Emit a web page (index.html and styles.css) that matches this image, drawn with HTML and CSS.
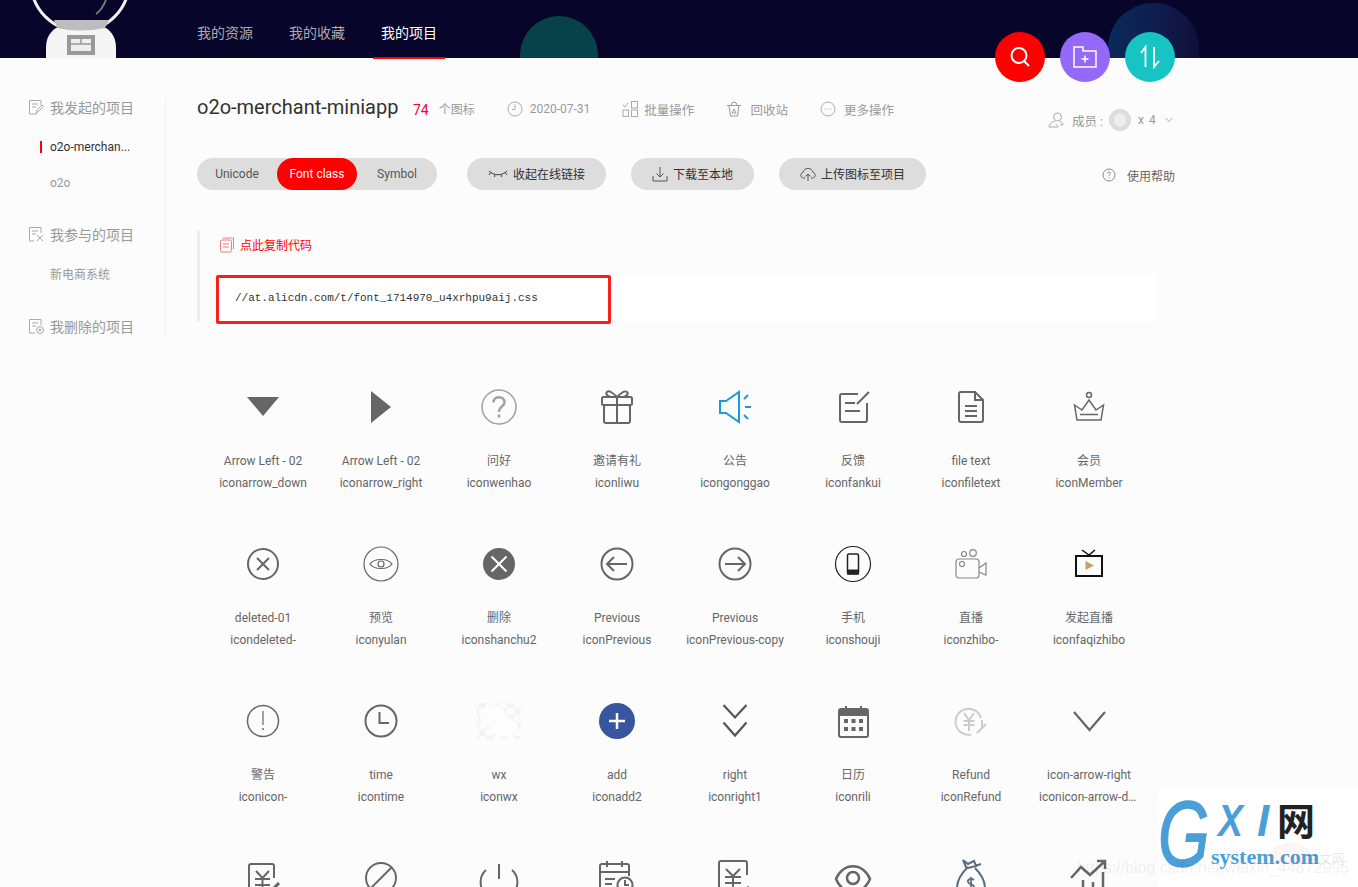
FILE: index.html
```html
<!DOCTYPE html>
<html lang="zh">
<head>
  <meta charset="UTF-8">
  <title>o2o-merchant-miniapp</title>
  <link rel="stylesheet" href="styles.css">
</head>
<body>
  <header class="top">
    <svg class="astro" width="140" height="58" viewBox="0 0 140 58">
      <circle cx="80" cy="-18" r="49" fill="none" stroke="#f2f2f2" stroke-width="3"/>
      <path d="M106 0q-4 10-10 14" fill="none" stroke="#777" stroke-width="2"/>
      <path d="M46 58V48C46 38 50 32 56 28H106C112 32 116 38 116 48V58Z" fill="#f5f5f5"/>
      <path d="M54 20H109L105 28Q80 33 57 28Z" fill="#bdbdbd"/>
      <rect x="67" y="35" width="28" height="20" fill="#999"/>
      <rect x="71" y="39" width="20" height="12" fill="#eee"/>
      <path d="M71 44H91M81 39V44" stroke="#999" stroke-width="1.5"/>
    </svg>
    <div class="blob blob-teal"></div>
    <div class="blob blob-blue"></div>
    <nav class="nav">
      <a class="nav-item">我的资源</a>
      <a class="nav-item">我的收藏</a>
      <a class="nav-item active">我的项目</a>
    </nav>
    <div class="fabs">
      <a class="fab fab-red">
        <svg width="24" height="24" viewBox="0 0 24 24" fill="none" stroke="#fff" stroke-width="2"><circle cx="11" cy="10.5" r="7.5"/><path d="M16 16l5 5"/></svg>
      </a>
      <a class="fab fab-purple">
        <svg width="26" height="26" viewBox="0 0 26 26" fill="none" stroke="#fff" stroke-width="1.5"><path d="M2 23V3H11V7H24V23Z"/><path d="M13 11.5v7M9.5 15h7"/></svg>
      </a>
      <a class="fab fab-teal">
        <svg width="26" height="26" viewBox="0 0 26 26" fill="none" stroke="#fff" stroke-width="1.800"><path d="M4 9L8.500 3V23"/><path d="M17 3V23L22 17"/></svg>
      </a>
    </div>
  </header>

  <div class="upper">
    <aside class="side">
      <div class="side-head">
        <svg class="ico16" viewBox="0 0 16 16" fill="none" stroke="#aaa"><path d="M9 15H1.500V1.500H13V6M4 5H10M4 8H8"/><path d="M8 14l1-3 5-5 1.500 1.500-5 5z"/></svg>
        我发起的项目
      </div>
      <a class="side-item current">o2o-merchan...</a>
      <a class="side-item">o2o</a>
      <div class="side-head gap">
        <svg class="ico16" viewBox="0 0 16 16" fill="none" stroke="#aaa"><path d="M6 15H1.500V1.500H13V7M4 5H10M4 8H8"/><path d="M9 9l6 6M15 9l-6 6"/></svg>
        我参与的项目
      </div>
      <a class="side-item">新电商系统</a>
      <div class="side-head gap">
        <svg class="ico16" viewBox="0 0 16 16" fill="none" stroke="#aaa"><path d="M7 15H1.500V1.500H13V7M4 5H10M4 8H8"/><circle cx="12" cy="12" r="3.500"/><path d="M10.500 10.500l3 3M13.500 10.500l-3 3"/></svg>
        我删除的项目
      </div>
    </aside>

    <main class="main">
      <div class="title-row">
        <h1 class="title">o2o-merchant-miniapp</h1>
        <span class="count">74</span>
        <span class="count-unit">个图标</span>
        <span class="meta date">
          <svg class="ico16" viewBox="0 0 16 16" fill="none" stroke="#aaa"><circle cx="8" cy="8" r="7"/><path d="M8 3.500V8.500H5"/></svg>
          2020-07-31
        </span>
        <span class="meta narrow">
          <svg class="ico16" viewBox="0 0 16 16" fill="none" stroke="#aaa"><path d="M1 4l2 2 3-4"/><rect x="9.500" y=".5" width="6" height="6.500"/><rect x="1" y="9" width="5.500" height="6.500"/><rect x="9.500" y="9" width="6" height="6.500"/></svg>
          批量操作
        </span>
        <span class="meta">
          <svg class="ico16" viewBox="0 0 16 16" fill="none" stroke="#999"><path d="M1 4.500H15M3 4.500L4.500 15H11.500L13 4.500M5 4.500C5 0 11 0 11 4.500M8 8l-2 4h4z"/></svg>
          回收站
        </span>
        <span class="meta">
          <svg class="ico16" viewBox="0 0 16 16" fill="none" stroke="#aaa"><circle cx="8" cy="8" r="7"/><path d="M4.500 8h1M7.500 8h1M10.500 8h1" stroke-width="1.200"/></svg>
          更多操作
        </span>
        <div class="members">
          <svg class="ico16" viewBox="0 0 16 16" fill="none" stroke="#aaa"><circle cx="9.500" cy="5" r="4"/><path d="M7 9C4 10 1 12 1 15H10C9.500 13 8 13 7.500 12M12 9.500C13.500 10 15 11 15 13H12"/></svg>
          <span class="members-label">成员 :</span>
          <span class="avatar"><span class="avatar-in"></span></span>
          <span class="members-num">x 4</span>
          <svg class="chev" width="8" height="6" viewBox="0 0 8 6" fill="none" stroke="#aaa"><path d="M.5 1L4 4.500 7.500 1"/></svg>
        </div>
      </div>

      <div class="toolbar">
        <div class="tabs">
          <a class="tab">Unicode</a>
          <a class="tab on">Font class</a>
          <a class="tab">Symbol</a>
        </div>
        <a class="pill first">
          <svg width="20" height="8" viewBox="0 0 20 8" fill="none" stroke="#444"><path d="M1 1C6 6 14 6 19 1M3 2L1 5M7 4L6.500 7M13 4L13.500 7M17 2L19 5"/></svg>
          收起在线链接
        </a>
        <a class="pill">
          <svg class="ico16" viewBox="0 0 16 16" fill="none" stroke="#555"><path d="M1 10V15H15V10M8 1V11M4.500 7.500L8 11 11.500 7.500"/></svg>
          下载至本地
        </a>
        <a class="pill">
          <svg class="ico16" viewBox="0 0 16 16" fill="none" stroke="#555"><path d="M5 12H3.500C0 12 0 7 3 6.500 4 1 12 1 13 6.500 16 7 16 12 12.500 12H11M8 15V8M5.500 10.500L8 8l2.500 2.500"/></svg>
          上传图标至项目
        </a>
        <a class="help">
          <svg class="ico14" viewBox="0 0 14 14" fill="none" stroke="#888"><circle cx="7" cy="7" r="6"/><path d="M5.500 5.500C5.500 3.500 8.500 3.500 8.500 5.500 8.500 6.800 7 6.500 7 8.200M7 9.500v1"/></svg>
          使用帮助
        </a>
      </div>

      <section class="code-block">
        <a class="copy">
          <svg class="ico16" viewBox="0 0 16 16" fill="none" stroke="#f5787a"><rect x="1.500" y="3" width="11" height="12" rx="1.500"/><path d="M4 1H14.500V12M4 7H10M4 10H10"/></svg>
          点此复制代码
        </a>
        <div class="code">
          //at.alicdn.com/t/font_1714970_u4xrhpu9aij.css
          <div class="mark"></div>
        </div>
      </section>
    </main>
  </div>

  <div class="grid">
    <div class="cell">
      <svg class="ic" viewBox="0 0 40 40"><path d="M4 10H36L20 29Z" fill="#666"/></svg>
      <p>Arrow Left - 02</p><p class="nm">iconarrow_down</p>
    </div>
    <div class="cell">
      <svg class="ic" viewBox="0 0 40 40"><path d="M10 4L30 20 10 36Z" fill="#666"/></svg>
      <p>Arrow Left - 02</p><p class="nm">iconarrow_right</p>
    </div>
    <div class="cell">
      <svg class="ic" viewBox="0 0 40 40" fill="none" stroke="#a0a0a0"><circle cx="20" cy="20" r="17" stroke-width="1.500"/><path d="M14.500 15.500C14.500 8.500 25.500 8.500 25.500 15.500 25.500 19.500 20 19.500 20 25" stroke-width="2.500"/><path d="M20 27.500v3" stroke-width="2.500"/></svg>
      <p>问好</p><p class="nm">iconwenhao</p>
    </div>
    <div class="cell">
      <svg class="ic" viewBox="0 0 40 40" fill="none" stroke="#666" stroke-width="2"><rect x="5" y="10" width="30" height="8" rx="1.500"/><rect x="7" y="18" width="26" height="18" rx="2"/><path d="M20 10V36M20 10C16 6 12 3 10 5 8 7 11 10 14 10M20 10C24 6 28 3 30 5 32 7 29 10 26 10"/></svg>
      <p>邀请有礼</p><p class="nm">iconliwu</p>
    </div>
    <div class="cell">
      <svg class="ic" viewBox="0 0 40 40" fill="none" stroke="#1b9ae0" stroke-width="2"><path d="M5 14H11L24 5V35L11 26H5Z"/><path d="M29 12L33 8M30 20H36M29 28L33 32"/></svg>
      <p>公告</p><p class="nm">icongonggao</p>
    </div>
    <div class="cell">
      <svg class="ic" viewBox="0 0 40 40" fill="none" stroke="#666" stroke-width="2"><path d="M25 7H9A2 2 0 0 0 7 9V33A2 2 0 0 0 9 35H32A2 2 0 0 0 34 33V16"/><path d="M24 17L36 5M12 16H22M12 24H27"/></svg>
      <p>反馈</p><p class="nm">iconfankui</p>
    </div>
    <div class="cell">
      <svg class="ic" viewBox="0 0 40 40" fill="none" stroke="#666" stroke-width="2"><path d="M10 5H24L32 13V33A2 2 0 0 1 30 35H10A2 2 0 0 1 8 33V7A2 2 0 0 1 10 5ZM24 5V13H32M14 19H26M14 24H26M14 29H26"/></svg>
      <p>file text</p><p class="nm">iconfiletext</p>
    </div>
    <div class="cell">
      <svg class="ic" viewBox="0 0 40 40" fill="none" stroke="#666" stroke-width="1.500"><circle cx="20" cy="8" r="2.500"/><path d="M5.500 18L13 23 20 13 27 23 34.500 18 32 33H8ZM11 27.500H29"/></svg>
      <p>会员</p><p class="nm">iconMember</p>
    </div>

    <div class="cell">
      <svg class="ic" viewBox="0 0 40 40" fill="none" stroke="#666" stroke-width="2"><circle cx="20" cy="20" r="15"/><path d="M14 14L26 26M26 14L14 26"/></svg>
      <p>deleted-01</p><p class="nm">icondeleted-</p>
    </div>
    <div class="cell">
      <svg class="ic" viewBox="0 0 40 40" fill="none" stroke="#666" stroke-width="1.200"><circle cx="20" cy="20" r="17"/><path d="M9 20C13 14 27 14 31 20 27 26 13 26 9 20Z"/><circle cx="20" cy="20" r="3"/></svg>
      <p>预览</p><p class="nm">iconyulan</p>
    </div>
    <div class="cell">
      <svg class="ic" viewBox="0 0 40 40" fill="none"><circle cx="20" cy="20" r="16" fill="#666"/><path d="M12.500 12.500L27.500 27.500M27.500 12.500L12.500 27.500" stroke="#fff" stroke-width="2"/></svg>
      <p>删除</p><p class="nm">iconshanchu2</p>
    </div>
    <div class="cell">
      <svg class="ic" viewBox="0 0 40 40" fill="none" stroke="#666" stroke-width="2"><circle cx="20" cy="20" r="15.500"/><path d="M30 20H10M17 13L10 20 17 27"/></svg>
      <p>Previous</p><p class="nm">iconPrevious</p>
    </div>
    <div class="cell">
      <svg class="ic" viewBox="0 0 40 40" fill="none" stroke="#666" stroke-width="2"><circle cx="20" cy="20" r="15.500"/><path d="M10 20H30M23 13L30 20 23 27"/></svg>
      <p>Previous</p><p class="nm">iconPrevious-copy</p>
    </div>
    <div class="cell">
      <svg class="ic" viewBox="0 0 40 40" fill="none" stroke="#222"><circle cx="20" cy="20" r="17.500" stroke-width="1.200"/><rect x="14.500" y="10" width="11" height="20" rx="1.500" stroke-width="1.500"/><rect x="14.500" y="26" width="11" height="4" fill="#222"/></svg>
      <p>手机</p><p class="nm">iconshouji</p>
    </div>
    <div class="cell">
      <svg class="ic" viewBox="0 0 40 40" fill="none" stroke="#888" stroke-width="1.200"><rect x="5" y="15" width="23" height="19" rx="3"/><path d="M28 24L35 19V31L28 28"/><circle cx="13" cy="10" r="2.500"/><circle cx="22" cy="9" r="3.300"/><circle cx="11" cy="20" r="2.500"/></svg>
      <p>直播</p><p class="nm">iconzhibo-</p>
    </div>
    <div class="cell">
      <svg class="ic" viewBox="0 0 40 40" fill="none"><rect x="7" y="12" width="26" height="20" stroke="#111" stroke-width="2"/><path d="M13 6L20 11 26 6" stroke="#111" stroke-width="1.500"/><path d="M16.500 17L25 21.500 16.500 26Z" fill="#c9a063"/></svg>
      <p>发起直播</p><p class="nm">iconfaqizhibo</p>
    </div>

    <div class="cell">
      <svg class="ic" viewBox="0 0 40 40" fill="none" stroke="#666"><circle cx="20" cy="20" r="15.500" stroke-width="1.500"/><path d="M20 10V24" stroke-width="1.200"/><path d="M20 27v2" stroke-width="1.500"/></svg>
      <p>警告</p><p class="nm">iconicon-</p>
    </div>
    <div class="cell">
      <svg class="ic" viewBox="0 0 40 40" fill="none" stroke="#666" stroke-width="2"><circle cx="20" cy="20" r="15.500"/><path d="M18.500 11V22H28"/></svg>
      <p>time</p><p class="nm">icontime</p>
    </div>
    <div class="cell">
      <svg class="ic" viewBox="0 0 40 40">
        <defs><pattern id="chk" width="14" height="14" patternUnits="userSpaceOnUse"><rect width="7" height="7" fill="#f3f3f3"/><rect x="7" y="7" width="7" height="7" fill="#f3f3f3"/></pattern></defs>
        <rect x="-2" y="2" width="44" height="36" fill="url(#chk)"/>
        <ellipse cx="14" cy="15" rx="13" ry="11" fill="#fdfdfd"/>
        <ellipse cx="25" cy="26" rx="14" ry="10" fill="#fdfdfd"/>
      </svg>
      <p>wx</p><p class="nm">iconwx</p>
    </div>
    <div class="cell">
      <svg class="ic" viewBox="0 0 40 40"><circle cx="20" cy="20" r="18" fill="#3a559f"/><path d="M20 12V28M12 20H28" stroke="#fff" stroke-width="2.500"/></svg>
      <p>add</p><p class="nm">iconadd2</p>
    </div>
    <div class="cell">
      <svg class="ic" viewBox="0 0 40 40" fill="none" stroke="#555" stroke-width="2.200"><path d="M8.500 4L20 16.500 31.500 4M8.500 21.500L20 34.500 31.500 21.500"/></svg>
      <p>right</p><p class="nm">iconright1</p>
    </div>
    <div class="cell">
      <svg class="ic" viewBox="0 0 40 40"><rect x="6" y="8" width="29" height="28" rx="2" fill="none" stroke="#666" stroke-width="2"/><rect x="6" y="8" width="29" height="7" fill="#666"/><path d="M13 5V11M28 5V11" stroke="#666" stroke-width="2"/><path d="M11 18h4v4h-4zM18.500 18h4v4h-4zM26 18h4v4h-4zM11 26h4v4h-4zM18.500 26h4v4h-4zM26 26h4v4h-4z" fill="#666"/></svg>
      <p>日历</p><p class="nm">iconrili</p>
    </div>
    <div class="cell">
      <svg class="ic" viewBox="0 0 40 40" fill="none" stroke="#ccc" stroke-width="2"><path d="M30 17A13 13 0 1 0 20 33.500"/><path d="M13 12L18 19 23 12M12.500 20H23.500M12.500 24H23.500M18 19V30M31 19V27L26 32M31 27L35 23"/></svg>
      <p>Refund</p><p class="nm">iconRefund</p>
    </div>
    <div class="cell">
      <svg class="ic" viewBox="0 0 40 40" fill="none" stroke="#666" stroke-width="2.200"><path d="M5 11L20.500 29 36 11"/></svg>
      <p>icon-arrow-right</p><p class="nm">iconicon-arrow-down</p>
    </div>

    <div class="cell">
      <svg class="ic" viewBox="0 0 40 40" fill="none" stroke="#666" stroke-width="2"><path d="M31 20V8A2 2 0 0 0 29 6H8A2 2 0 0 0 6 8V40M13 13L19.500 20 26 13M12 21H27M12 27H27M19.500 20V34"/><path d="M27 34L36 25" stroke-width="3"/></svg>
    </div>
    <div class="cell">
      <svg class="ic" viewBox="0 0 40 40" fill="none" stroke="#666" stroke-width="2"><circle cx="20" cy="20" r="15"/><path d="M9 31L31 9"/></svg>
    </div>
    <div class="cell">
      <svg class="ic" viewBox="0 0 40 40" fill="none" stroke="#666" stroke-width="2"><path d="M7 12A16 16 0 0 0 7 36M33 12A16 16 0 0 1 33 36M20 6V21"/></svg>
    </div>
    <div class="cell">
      <svg class="ic" viewBox="0 0 40 40" fill="none" stroke="#666" stroke-width="2"><path d="M18 32H5A2 2 0 0 1 3 30V8A2 2 0 0 1 5 6H30A2 2 0 0 1 32 8V18M3 14H32M10 3V9M25 3V9M8 21H18M8 26H15"/><circle cx="28" cy="27" r="7.500"/><path d="M28 22V27H32"/></svg>
    </div>
    <div class="cell">
      <svg class="ic" viewBox="0 0 40 40" fill="none" stroke="#666" stroke-width="2"><path d="M32 17V5A2 2 0 0 0 30 3H6A2 2 0 0 0 4 5V40M11 11L18 18 25 11M10 19H26M10 25H26M18 18V33"/><path d="M29 33L34 29" stroke-width="3"/></svg>
    </div>
    <div class="cell">
      <svg class="ic" viewBox="0 0 40 40" fill="none" stroke="#666" stroke-width="2.500"><path d="M3 21C10 4 30 4 37 21 30 38 10 38 3 21Z"/><circle cx="20" cy="20" r="6"/></svg>
    </div>
    <div class="cell">
      <svg class="ic" viewBox="0 0 40 40" fill="none" stroke="#5a6d80" stroke-width="2"><path d="M12 2L17 6 23 3 25 8 17 10 15 9ZM16 10C10 16 6 24 6 30 6 38 34 38 34 30 34 24 30 16 24 10M24 8L30 6"/><path d="M23 22C21 20 16 21 17 24 18 27 23 26 23 29 23 32 18 32 16 30M20 19V34" stroke-width="1.800"/></svg>
    </div>
    <div class="cell">
      <svg class="ic" viewBox="0 0 40 40" fill="none" stroke="#666" stroke-width="2.500"><path d="M2 20L12 9 21 17 35 4M28 3H36V11M4 40V30M14 40V22M24 40V24M34 40V14"/></svg>
    </div>
  </div>

  <div class="logo">
    <span class="logo-g">G</span>
    <span class="logo-x">X</span>
    <span class="logo-i">I</span>
    <span class="logo-wang">网</span>
    <span class="logo-sys">system.com</span>
    <span class="logo-php"></span>
    <span class="logo-cn">中文网</span>
  </div>
  <div class="blog-mark">https://blog.csdn.net/weixin_44872995</div>
</body>
</html>
```

FILE: styles.css
```css
* { margin: 0; padding: 0; box-sizing: border-box; }
html, body { height: 100%; overflow: hidden; }
body {
  background: #fcfcfc;
  color: #666;
  font-family: Roboto, "Noto Sans CJK SC", sans-serif;
  font-size: 12px;
}

/* top bar */
.top {
  position: relative;
  height: 58px;
  background: #07062a;
}
.astro { position: absolute; left: 0; top: 0; }
.blob { position: absolute; }
.blob-teal {
  left: 520px; top: 16px;
  width: 78px; height: 42px;
  border-radius: 39px 39px 0 0;
  background: #074149;
}
.blob-blue {
  left: 1108px; top: 3px;
  width: 91px; height: 55px;
  border-radius: 46px 46px 0 0;
  background: linear-gradient(90deg, #0a2a5c, #0f1c4d 55%, #120f3a);
}
.nav {
  position: relative;
  display: flex;
  gap: 20px;
  padding-left: 189px;
}
.nav-item {
  width: 72px;
  height: 59px;
  line-height: 66px;
  font-size: 14px;
  text-align: center;
  color: #a9a9b5;
  border-bottom: 2px solid transparent;
}
.nav-item.active { color: #fff; border-bottom-color: #f00; }
.fabs {
  position: absolute;
  left: 995px; top: 32px;
  display: flex;
  gap: 15px;
}
.fab {
  display: flex;
  align-items: center;
  justify-content: center;
  width: 50px; height: 50px;
  border-radius: 50%;
}
.fab-red { background: #f00; }
.fab-purple { background: #9569f7; }
.fab-teal { background: #17c4c4; }

/* sidebar + head */
.upper { display: flex; padding-top: 40px; }
.side {
  width: 166px;
  height: 239px;
  border-right: 1px solid #f0f0f0;
  padding-left: 28px;
  overflow: hidden;
}
.side-head {
  display: flex;
  align-items: center;
  gap: 6px;
  height: 18px;
  margin-bottom: 13px;
  font-size: 14px;
  color: #999;
}
.side-head.gap { margin-top: 24px; margin-bottom: 14px; }
.side-item {
  position: relative;
  display: block;
  height: 36px;
  line-height: 36px;
  padding-left: 22px;
  color: #999;
}
.side-item.current { color: #333; }
.side-item.current::before {
  content: "";
  position: absolute;
  left: 12px; top: 12px;
  width: 2px; height: 12px;
  background: #f00;
}
.ico16 { width: 16px; height: 16px; flex: none; }
.ico14 { width: 14px; height: 14px; flex: none; }

.main { width: 978px; margin-left: 31px; }
.title-row { display: flex; height: 60px; }
.title {
  width: 200px;
  height: 18px;
  line-height: 18px;
  font-size: 20px;
  font-weight: 400;
  white-space: nowrap;
  color: #333;
}
.count {
  margin: 3px 0 0 16px;
  line-height: 18px;
  font-size: 14px;
  color: #f5003d;
}
.count-unit { margin: 3px 0 0 10px; line-height: 18px; color: #999; }
.meta {
  display: flex;
  align-items: center;
  gap: 8px;
  height: 18px;
  margin: 2px 0 0 32px;
  font-size: 12.5px;
  color: #999;
}
.meta.date { gap: 7px; font-size: 12px; }
.meta.narrow { gap: 6px; }
.members {
  display: flex;
  align-items: center;
  height: 24px;
  margin: 10px 0 0 auto;
  padding-right: 2px;
  color: #999;
}
.members-label { width: 33px; margin-left: 8px; font-size: 12.5px; white-space: nowrap; }
.avatar {
  display: flex;
  justify-content: center;
  align-items: center;
  width: 22px; height: 22px;
  margin-left: 4px;
  border-radius: 50%;
  background: #ddd;
}
.avatar-in { width: 12px; height: 14px; border-radius: 50%; background: #eee; }
.members-num { width: 15px; margin-left: 7px; letter-spacing: 1px; white-space: nowrap; }
.chev { margin-left: 12px; }

.toolbar { display: flex; align-items: center; height: 32px; }
.tabs {
  display: flex;
  width: 240px;
  height: 32px;
  border-radius: 16px;
  background: #ddd;
}
.tab {
  width: 80px;
  line-height: 33px;
  text-align: center;
  color: #555;
}
.tab.on { border-radius: 16px; background: #f00; color: #fff; }
.pill {
  display: flex;
  align-items: center;
  gap: 5px;
  height: 32px;
  margin-left: 25px;
  padding: 0 21px 1px;
  border-radius: 16px;
  background: #ddd;
  color: #333;
}
.pill.first { margin-left: 30px; }
.help {
  display: flex;
  align-items: center;
  gap: 11px;
  margin: 2px 0 0 auto;
  color: #666;
}

.code-block {
  margin-top: 40px;
  height: 92px;
  padding-left: 19px;
  border-left: 3px solid #eee;
}
.copy {
  display: flex;
  align-items: center;
  gap: 5px;
  height: 29px;
  color: #f00;
}
.code {
  position: relative;
  width: 939px;
  height: 47px;
  margin: 16px 0 0 -2px;
  padding-left: 18px;
  background: #fff;
  font-family: "Liberation Mono", monospace;
  font-size: 11px;
  letter-spacing: -.02px;
  line-height: 47px;
  color: #333;
}
.mark {
  position: absolute;
  left: -1px; top: 0;
  width: 395px; height: 49px;
  border: 3px solid #f5211a;
  border-radius: 2px;
}

/* icon grid */
.grid {
  display: grid;
  grid-template-columns: repeat(8, 118px);
  grid-auto-rows: 157px;
  margin: 50px 0 0 204px;
}
.cell { text-align: center; line-height: 22px; }
.cell p {
  padding: 0 9px;
  white-space: nowrap;
  overflow: hidden;
  text-overflow: ellipsis;
}
.ic {
  display: block;
  width: 40px; height: 40px;
  margin: 0 auto 23px;
  overflow: visible;
}

/* watermark in the corner */
.logo {
  position: fixed;
  left: 1158px; top: 787px;
  width: 200px; height: 100px;
  background: #fff;
  overflow: hidden;
}
.logo span { position: absolute; font-family: "Liberation Sans", sans-serif; }
.logo .logo-g {
  left: 0; top: 1px;
  font-size: 92px;
  line-height: 92px;
  font-style: italic;
  color: #4a9fd8;
  -webkit-text-stroke: 1.5px #4a9fd8;
  transform: scaleX(.72);
  transform-origin: 0 0;
}
.logo .logo-x, .logo .logo-i {
  top: 12px;
  font-size: 44px;
  line-height: 44px;
  font-style: italic;
  font-weight: 700;
  color: #4a9fd8;
}
.logo .logo-x { left: 60px; transform: scaleX(.85); transform-origin: 0 0; }
.logo .logo-i { left: 99px; }
.logo .logo-wang {
  left: 119px; top: 10px;
  font-family: "Noto Sans CJK SC", sans-serif;
  font-size: 38px;
  line-height: 44px;
  font-weight: 700;
  color: #222;
}
.logo .logo-sys {
  left: 53px; top: 58px;
  font-family: "Liberation Serif", serif;
  font-size: 22px;
  line-height: 24px;
  font-weight: 700;
  color: #4a9fd8;
}
.logo-php {
  left: 112px; top: 56px;
  width: 40px; height: 22px;
  border-radius: 50%;
  background: rgba(230, 60, 40, .05);
}
.logo .logo-cn {
  left: 148px; top: 62px;
  font-family: "Noto Sans CJK SC", sans-serif;
  font-size: 13px;
  line-height: 18px;
  color: rgba(0, 0, 0, .1);
}
.blog-mark {
  position: fixed;
  left: 1077px; top: 857px;
  font-family: "Liberation Sans", sans-serif;
  font-size: 16px;
  line-height: 22px;
  color: rgba(0, 0, 0, .06);
  white-space: nowrap;
}
```
